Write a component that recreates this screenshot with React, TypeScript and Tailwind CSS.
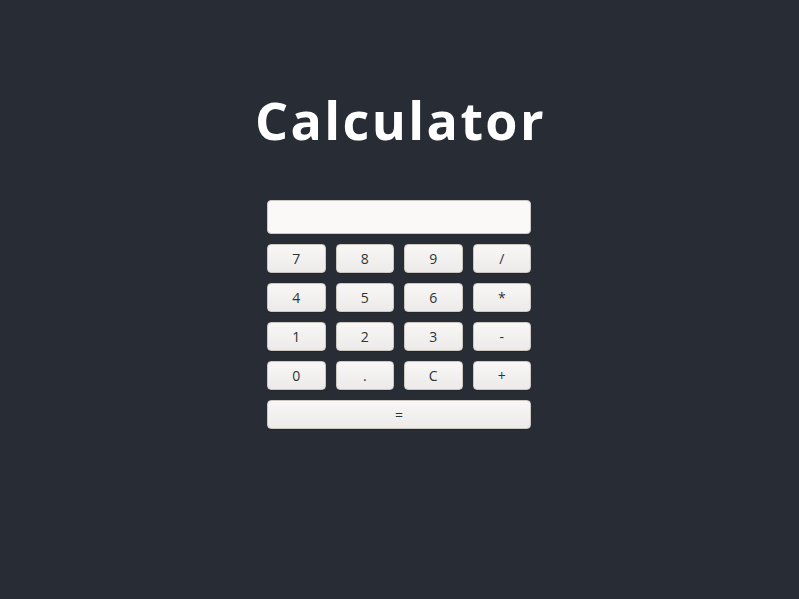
const keys = ["7", "8", "9", "/", "4", "5", "6", "*", "1", "2", "3", "-", "0", ".", "C", "+"];

function Key({ label, wide }: { label: string; wide?: boolean }) {
  return (
    <button
      className={
        "h-[29px] rounded-[4px] border border-[#cdc7c2] bg-gradient-to-b from-[#f8f7f6] to-[#edebe9] text-[14px] text-[#2e3436] shadow-[0_1px_0_rgba(0,0,0,0.15)]" +
        (wide ? " col-span-4" : "")
      }
    >
      {label}
    </button>
  );
}

export default function App() {
  return (
    <div
      className="min-h-[599px] bg-[#282c34] flex flex-col items-center"
      style={{ fontFamily: '"Open Sans", "Noto Sans", sans-serif' }}
    >
      <h1 className="mt-[82px] text-[52px] leading-[76px] font-bold text-white tracking-[2.4px] pl-[2px]">Calculator</h1>
      <div className="mt-[42px] w-[265px] pr-[1px]">
        <input
          className="block w-full h-[34px] rounded-[4px] border border-[#cdc7c2] bg-[#faf9f8] outline-none"
          readOnly
        />
        <div className="mt-[10px] grid grid-cols-4 gap-x-[10px] gap-y-[10px]">
          {keys.map((k) => (
            <Key key={k} label={k} />
          ))}
          <Key label="=" wide />
        </div>
      </div>
    </div>
  );
}
